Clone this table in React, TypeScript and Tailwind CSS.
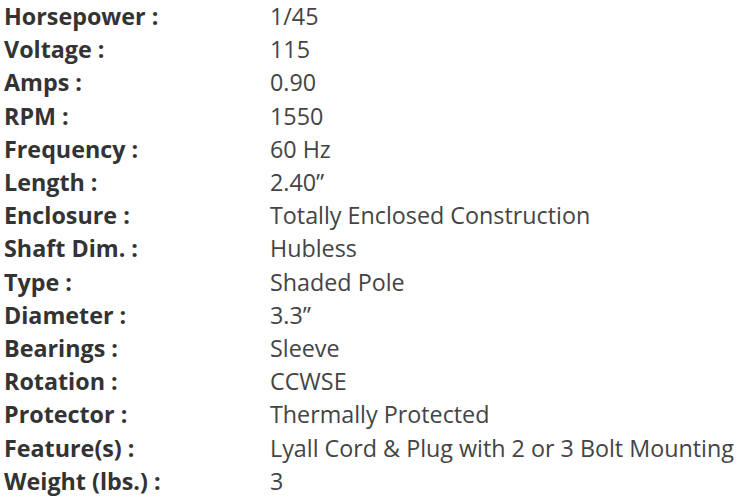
import React from "react";

const rows: [string, string][] = [
  ["Horsepower :", "1/45"],
  ["Voltage :", "115"],
  ["Amps :", "0.90"],
  ["RPM :", "1550"],
  ["Frequency :", "60 Hz"],
  ["Length :", "2.40\u201D"],
  ["Enclosure :", "Totally Enclosed Construction"],
  ["Shaft Dim. :", "Hubless"],
  ["Type :", "Shaded Pole"],
  ["Diameter :", "3.3\u201D"],
  ["Bearings :", "Sleeve"],
  ["Rotation :", "CCWSE"],
  ["Protector :", "Thermally Protected"],
  ["Feature(s) :", "Lyall Cord & Plug with 2 or 3 Bolt Mounting"],
  ["Weight (lbs.) :", "3"],
];

export default function App() {
  return (
    <div
      className="w-[746px] h-[500px] bg-white overflow-hidden pl-[4px]"
      style={{ fontFamily: '"Open Sans", sans-serif' }}
    >
      <div className="grid grid-cols-[266px_1fr] text-[23.3px] leading-[33.2px]">
        {rows.map(([k, v]) => (
          <React.Fragment key={k}>
            <div className="font-bold text-[#333333] whitespace-nowrap">{k}</div>
            <div className="text-[#444444] whitespace-nowrap">{v}</div>
          </React.Fragment>
        ))}
      </div>
    </div>
  );
}
